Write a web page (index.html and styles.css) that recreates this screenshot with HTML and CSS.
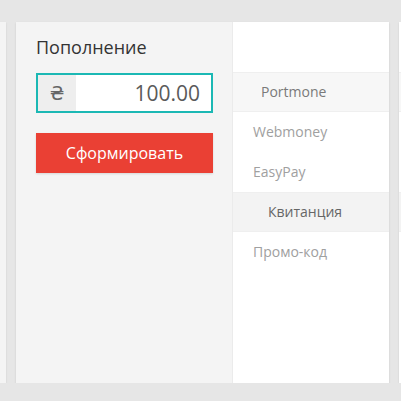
FILE: index.html
```html
<!DOCTYPE html>
<html lang="ru">
<head>
<meta charset="utf-8">
<link rel="stylesheet" href="styles.css">
</head>
<body>
<div class="desk">
  <div class="card card-side card-left"></div>
  <div class="card card-main">
    <div class="pane-form">
      <div class="title">Пополнение</div>
      <div class="amount">
        <span class="currency">₴</span>
        <span class="value">100.00</span>
      </div>
      <button class="submit">Сформировать</button>
    </div>
    <div class="pane-menu">
      <div class="menu-top"></div>
      <div class="menu-row head head-portmone">Portmone</div>
      <div class="menu-row">Webmoney</div>
      <div class="menu-row">EasyPay</div>
      <div class="menu-row head head-receipt">Квитанция</div>
      <div class="menu-row">Промо-код</div>
    </div>
  </div>
  <div class="card card-side card-right">
    <div class="menu-top"></div>
    <div class="menu-row head"></div>
    <div class="menu-row"></div>
    <div class="menu-row"></div>
    <div class="menu-row head"></div>
    <div class="menu-row"></div>
  </div>
</div>
</body>
</html>
```

FILE: styles.css
```css
html, body {
  margin: 0;
  padding: 0;
  background: #e6e6e6;
  font-family: "Open Sans", "Liberation Sans", sans-serif;
  overflow: hidden;
}
.desk {
  display: flex;
  gap: 10px;
  padding-top: 22px;
  height: 361px;
}
.card {
  height: 361px;
  box-shadow: 0 1px 2px rgba(0,0,0,0.12);
  flex: none;
}
.card-left {
  width: 6px;
  background: #f4f4f4;
}
.card-right {
  width: 2px;
  background: #fff;
  display: flex;
  flex-direction: column;
}
.card-main {
  width: 373px;
  display: flex;
  background: #fff;
}
.pane-form {
  width: 217px;
  background: #f4f4f4;
  border-right: 1px solid #ebebeb;
  padding: 13px 0 0 20px;
  box-sizing: border-box;
  display: flex;
  flex-direction: column;
}
.title {
  font-size: 18px;
  line-height: 25px;
  color: #333;
}
.amount {
  margin-top: 13px;
  width: 177px;
  height: 40px;
  box-sizing: border-box;
  border: 2px solid #1bb8b4;
  display: flex;
  background: #fff;
}
.currency {
  width: 38px;
  background: #eeeeee;
  display: flex;
  align-items: center;
  justify-content: center;
  font-family: "DejaVu Sans", sans-serif;
  font-size: 19px;
  color: #666;
}
.value {
  flex: 1;
  text-align: right;
  padding-right: 11px;
  font-size: 21px;
  line-height: 36px;
  color: #5a5a5a;
}
.submit {
  margin-top: 20px;
  width: 177px;
  height: 40px;
  border: 0;
  background: #ea4034;
  color: #fff;
  font-family: "Open Sans", "Liberation Sans", sans-serif;
  font-size: 16px;
  padding: 0;
  box-shadow: 0 1px 2px rgba(0,0,0,0.12);
}
.pane-menu {
  flex: 1;
  display: flex;
  flex-direction: column;
  background: #fff;
}
.menu-top {
  height: 50px;
  flex: none;
}
.menu-row {
  height: 40px;
  box-sizing: border-box;
  padding-left: 20px;
  font-size: 14px;
  line-height: 40px;
  color: #a0a0a0;
  flex: none;
}
.menu-row.head {
  background: #f7f7f7;
  border-top: 1px solid #efefef;
  border-bottom: 1px solid #efefef;
  line-height: 38px;
}
.head-portmone {
  padding-left: 28px;
  color: #7a7a7a;
}
.head-receipt {
  padding-left: 35px;
  color: #666;
}
.card .menu-row.head:nth-child(5) {
  background: #f3f3f3;
}
```
